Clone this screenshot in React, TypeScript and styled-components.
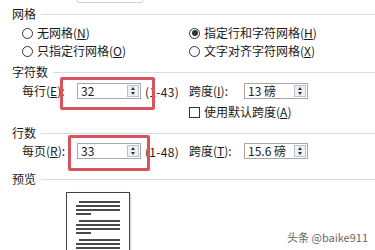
import React from 'react'
import styled, { createGlobalStyle } from 'styled-components'

const GlobalStyle = createGlobalStyle`
  html, body {
    margin: 0;
    padding: 0;
    background: #fff;
  }
  body {
    font-family: "Noto Sans CJK SC", "Liberation Sans", sans-serif;
    font-size: 12px;
    color: #1a1a1a;
  }
`

const Dialog = styled.div`
  position: relative;
  width: 375px;
  height: 250px;
  overflow: hidden;
  padding-left: 12px;
  box-sizing: border-box;
`

// bottom edge of a field cut off by the top of the screenshot
const CutField = styled.div`
  width: 64px;
  height: 2px;
  margin-left: 65px;
  border: 1px solid #cfcfcf;
  border-top: none;
  border-radius: 0 0 2px 2px;
`

const Header = styled.div<{ $top: number }>`
  display: flex;
  align-items: center;
  gap: 5px;
  height: 16px;
  line-height: 16px;
  margin-top: ${p => p.$top}px;
  &::after {
    content: '';
    flex: 1;
    height: 1px;
    background: #dcdcdc;
  }
`

const Row = styled.div<{ $top: number }>`
  display: grid;
  grid-template-columns: 167px 1fr;
  align-items: center;
  height: 18px;
  margin-top: ${p => p.$top}px;
  padding-left: 10px;
`

const Option = styled.label`
  display: flex;
  align-items: center;
  gap: 4px;
  white-space: nowrap;
  line-height: 18px;
`

const Radio = styled.span<{ $checked?: boolean }>`
  position: relative;
  width: 11px;
  height: 11px;
  border: 1px solid #333;
  border-radius: 50%;
  box-sizing: border-box;
  background: #fff;
  &::after {
    content: '';
    display: ${p => (p.$checked ? 'block' : 'none')};
    position: absolute;
    left: 1.5px;
    top: 1.5px;
    width: 6px;
    height: 6px;
    border-radius: 50%;
    background: #333;
  }
`

const Check = styled.span`
  width: 11px;
  height: 11px;
  border: 1px solid #333;
  box-sizing: border-box;
  background: #fff;
`

const Field = styled.div`
  display: flex;
  align-items: center;
  white-space: nowrap;
`

const FieldLabel = styled.span`
  width: 55px;
  line-height: 18px;
`

const InputWrap = styled.div`
  position: relative;
  display: flex;
  align-items: center;
`

const Input = styled.div`
  display: flex;
  align-items: center;
  justify-content: space-between;
  width: 64px;
  height: 16px;
  box-sizing: border-box;
  border: 1px solid #a8a8a8;
  padding-left: 3px;
  background: #fff;
  font-size: 12px;
  line-height: 14px;
`

const Spinner = styled.div`
  display: flex;
  flex-direction: column;
  align-items: center;
  justify-content: center;
  gap: 2px;
  width: 12px;
  height: 12px;
  margin-right: 1px;
  border: 1px solid #b9c3ce;
  box-sizing: border-box;
  background: #eef0f2;
`

const Arrow = styled.span<{ $down?: boolean }>`
  width: 0;
  height: 0;
  border-left: 2.5px solid transparent;
  border-right: 2.5px solid transparent;
  ${p => (p.$down ? 'border-top: 3px solid #333;' : 'border-bottom: 3px solid #333;')}
`

const Range = styled.span`
  margin-left: 4px;
  letter-spacing: 0.3px;
`

const Highlight = styled.span<{ $l: number; $t: number; $r: number; $b: number }>`
  position: absolute;
  left: ${p => -p.$l}px;
  top: ${p => -p.$t}px;
  right: ${p => -p.$r}px;
  bottom: ${p => -p.$b}px;
  border: 3.5px solid #d7545f;
  border-radius: 2px;
  pointer-events: none;
  z-index: 1;
`

const Page = styled.div`
  width: 64px;
  height: 70px;
  margin: 5px 0 0 54px;
  padding: 8px 9px 0 9px;
  box-sizing: border-box;
  border: 1px solid #444;
  box-shadow: 1px 1px 2px rgba(0, 0, 0, 0.2);
  background: #fff;
`

const Para = styled.div`
  display: flex;
  flex-direction: column;
  gap: 2px;
  margin-bottom: 5px;
`

const TextLine = styled.span<{ $w?: number; $indent?: boolean }>`
  display: block;
  height: 2px;
  width: ${p => (p.$w ? `${p.$w}px` : 'auto')};
  margin-left: ${p => (p.$indent ? '3px' : '0')};
  background: #4a4a4a;
`

const Watermark = styled.div`
  position: absolute;
  right: 7px;
  bottom: 5px;
  font-size: 11px;
  color: #666;
  text-shadow: 0 0 1px #fff;
`

const Acc: React.FC<{ k: string }> = ({ k }) => (
  <span>
    (<u>{k}</u>)
  </span>
)

const SpinInput: React.FC<{ value: string }> = ({ value }) => (
  <Input>
    <span>{value}</span>
    <Spinner>
      <Arrow />
      <Arrow $down />
    </Spinner>
  </Input>
)

const Paragraph: React.FC<{ lines: number }> = ({ lines }) => (
  <Para>
    <TextLine $indent />
    {Array.from({ length: lines - 2 }).map((_, i) => (
      <TextLine key={i} />
    ))}
    <TextLine $w={15} />
  </Para>
)

export default function App() {
  return (
    <>
      <GlobalStyle />
      <Dialog>
        <CutField />
        <Header $top={3}>网格</Header>
        <Row $top={2}>
          <Option>
            <Radio />
            <span>无网格<Acc k="N" /></span>
          </Option>
          <Option>
            <Radio $checked />
            <span>指定行和字符网格<Acc k="H" /></span>
          </Option>
        </Row>
        <Row $top={0}>
          <Option>
            <Radio />
            <span>只指定行网格<Acc k="O" /></span>
          </Option>
          <Option>
            <Radio />
            <span>文字对齐字符网格<Acc k="X" /></span>
          </Option>
        </Row>

        <Header $top={4}>字符数</Header>
        <Row $top={2}>
          <Field>
            <FieldLabel>每行<Acc k="E" />:</FieldLabel>
            <InputWrap>
              <SpinInput value="32" />
              <Highlight $l={17} $t={6} $r={14} $b={11} />
            </InputWrap>
            <Range>(1-43)</Range>
          </Field>
          <Field>
            <FieldLabel>跨度<Acc k="I" />:</FieldLabel>
            <SpinInput value="13 磅" />
          </Field>
        </Row>
        <Row $top={3}>
          <span />
          <Option>
            <Check />
            <span>使用默认跨度<Acc k="A" /></span>
          </Option>
        </Row>

        <Header $top={4}>行数</Header>
        <Row $top={1}>
          <Field>
            <FieldLabel>每页<Acc k="R" />:</FieldLabel>
            <InputWrap>
              <SpinInput value="33" />
              <Highlight $l={9} $t={8} $r={9} $b={12} />
            </InputWrap>
            <Range>(1-48)</Range>
          </Field>
          <Field>
            <FieldLabel>跨度<Acc k="T" />:</FieldLabel>
            <SpinInput value="15.6 磅" />
          </Field>
        </Row>

        <Header $top={11}>预览</Header>
        <Page>
          <Paragraph lines={4} />
          <Paragraph lines={4} />
          <Paragraph lines={4} />
        </Page>

        <Watermark>头条 @baike911</Watermark>
      </Dialog>
    </>
  )
}
